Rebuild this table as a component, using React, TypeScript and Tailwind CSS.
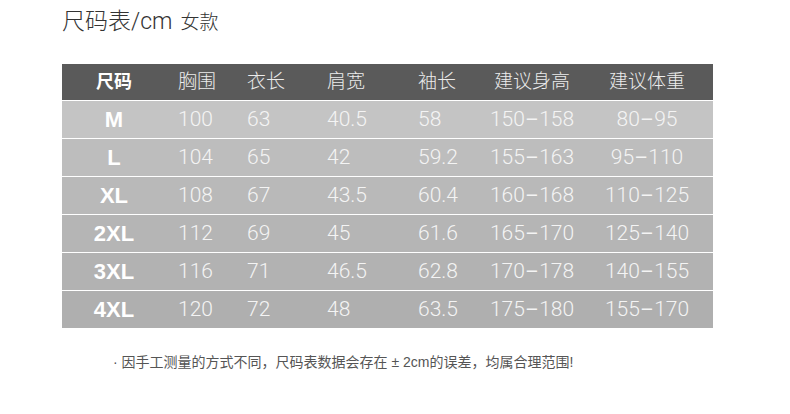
const font = "font-['Liberation_Sans','Noto_Sans_CJK_SC',sans-serif]";
const light = "font-['Roboto','Liberation_Sans','Noto_Sans_CJK_SC',sans-serif] font-light";

const headers = ["胸围", "衣长", "肩宽", "袖长", "建议身高", "建议体重"];

const rows = [
  { size: "M", bg: "bg-[#c4c4c4]", v: ["100", "63", "40.5", "58", "150−158", "80−95"] },
  { size: "L", bg: "bg-[#bdbdbd]", v: ["104", "65", "42", "59.2", "155−163", "95−110"] },
  { size: "XL", bg: "bg-[#b9b9b9]", v: ["108", "67", "43.5", "60.4", "160−168", "110−125"] },
  { size: "2XL", bg: "bg-[#b5b5b5]", v: ["112", "69", "45", "61.6", "165−170", "125−140"] },
  { size: "3XL", bg: "bg-[#b2b2b2]", v: ["116", "71", "46.5", "62.8", "170−178", "140−155"] },
  { size: "4XL", bg: "bg-[#afafaf]", v: ["120", "72", "48", "63.5", "175−180", "155−170"] },
];

const grid = "grid grid-cols-[116px_69px_80px_91px_69px_90px_1fr] items-center";

function Value({ text }: { text: string }) {
  const parts = text.split("−");
  if (parts.length < 2) return <>{text}</>;
  return (
    <>
      {parts[0]}
      <span className="mx-[1px] font-['Liberation_Sans',sans-serif] font-normal">−</span>
      {parts[1]}
    </>
  );
}

export default function App() {
  return (
    <div className={`w-[790px] h-[414px] bg-white ${font} overflow-hidden`}>
      <div className={`pl-[62px] pt-[10px] h-[64px] text-[#333] ${light}`}>
        <span className="text-[23px] leading-[24px]">尺码表/cm</span>
        <span className="text-[19px] leading-[24px] ml-[8px]">女款</span>
      </div>

      <div className="mx-[62px] w-[651px]">
        <div className={`${grid} h-[36px] bg-[#5a5a5a]`}>
          <div className="text-center pr-[12px] text-[18px] font-bold text-white">尺码</div>
          {headers.map((h, i) => (
            <div
              key={h}
              className={`text-[19px] ${light} text-[#ececec] ${i >= 4 ? "text-center" : ""} ${i === 5 ? "pl-[4px]" : ""}`}
            >
              {h}
            </div>
          ))}
        </div>

        {rows.map((r) => (
          <div key={r.size} className={`${grid} h-[38px] border-t border-white ${r.bg}`}>
            <div className="text-center pr-[12px] text-[22px] font-bold text-white">{r.size}</div>
            {r.v.map((val, i) => (
              <div
                key={i}
                className={`text-[21px] ${light} text-[#f4f4f4] ${i >= 4 ? "text-center" : ""} ${i === 5 ? "pl-[4px]" : ""}`}
              >
                <Value text={val} />
              </div>
            ))}
          </div>
        ))}
      </div>

      <div className="pl-[113px] pt-[24px] text-[14px] text-[#555]">
        · 因手工测量的方式不同，尺码表数据会存在 ± 2cm的误差，均属合理范围!
      </div>
    </div>
  );
}
